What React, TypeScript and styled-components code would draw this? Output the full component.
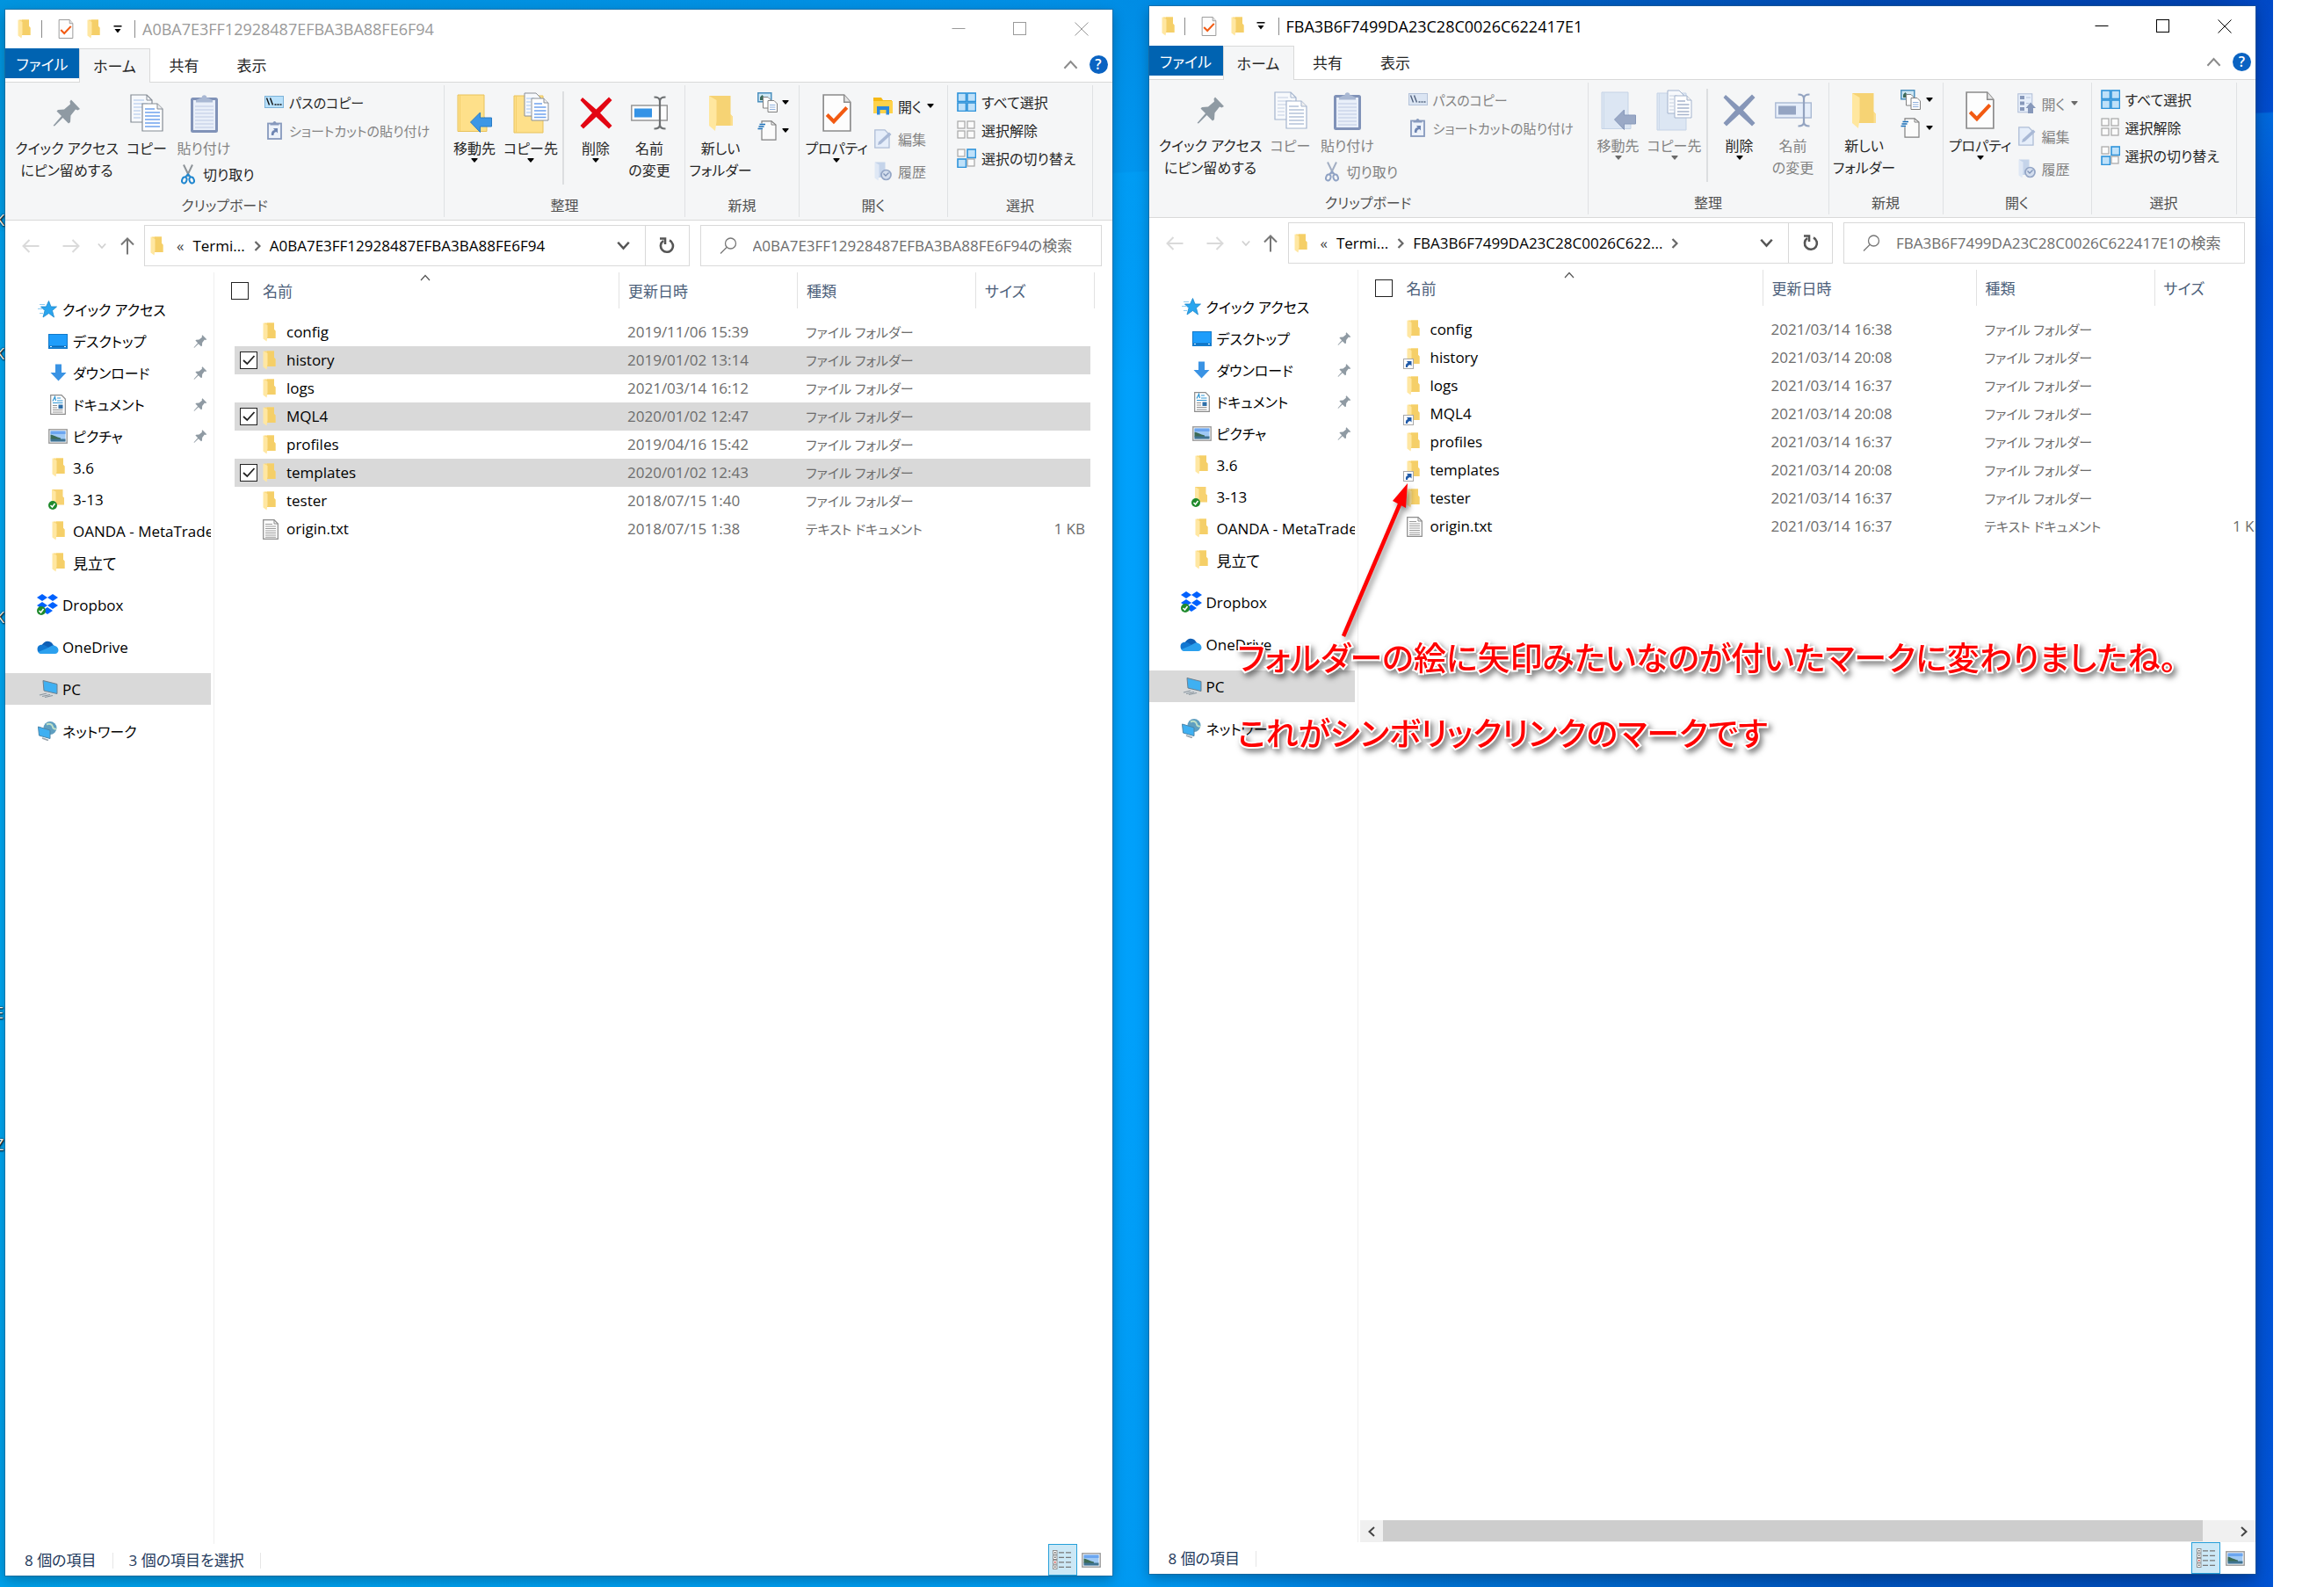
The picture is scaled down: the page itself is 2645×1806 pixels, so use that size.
import React from 'react';
import styled, { createGlobalStyle, css } from 'styled-components';

/* ---------- base ---------- */

const GlobalStyle = createGlobalStyle`
  *, *::before, *::after { box-sizing: border-box; }
  html, body { margin: 0; background: #fff; }
  body {
    font-family: "Open Sans", "Noto Sans CJK JP", sans-serif;
    font-size: 17px;
    color: #000;
    font-feature-settings: "palt";
  }
  button, input {
    font: inherit;
    font-feature-settings: inherit;
    color: inherit;
    margin: 0;
  }
  button { border: 0; padding: 0; background: none; }
  svg { display: block; flex: none; }
`;

const C = {
  line: '#d9d9d9',
  ribbon: '#f5f6f7',
  accent: '#0063b1',
  selected: '#d9d9d9',
  muted: '#6d6d6d',
  header: '#4c607a',
  status: '#1e395b',
};

const Page = styled.main`
  padding-right: 58px;
  background: #fff;
`;

const Desktop = styled.div`
  position: relative;
  display: flex;
  align-items: stretch;
  gap: 42px;
  min-height: 100vh;
  padding: 7px 20px 13px 6px;
  overflow: hidden;
  background:
    linear-gradient(177deg, transparent 0 262px, rgba(0, 170, 255, 0.3) 264px, transparent 420px),
    linear-gradient(180deg, rgba(0, 20, 90, 0.14), transparent 24%, transparent 64%, rgba(0, 90, 150, 0.1)),
    linear-gradient(90deg, #00a9f4 0%, #00a3fc 48%, #009dfa 52%, #0078dc 62%, #0052c0 82%, #0049bd 97%, #0052da 100%);
`;

const DesktopLabel = styled.span<{ $top: number }>`
  position: absolute;
  top: ${(p) => p.$top}px;
  left: -6px;
  font-size: 18px;
  line-height: 24px;
  color: #fff;
  text-shadow: 1px 1px 2px #000, 0 0 2px #000;
`;

/* ---------- window ---------- */

const Window = styled.section<{ $active?: boolean }>`
  position: relative;
  flex: 1 1 0;
  min-width: 0;
  display: flex;
  flex-direction: column;
  margin: ${(p) => (p.$active ? '0 0 2px' : '4px 0 0')};
  background: #fff;
  box-shadow: 0 0 0 1px rgba(40, 90, 130, 0.5), 0 5px 14px rgba(0, 0, 0, 0.28);
`;

const TitleBar = styled.header<{ $active?: boolean }>`
  display: flex;
  align-items: center;
  height: ${(p) => (p.$active ? 45 : 44)}px;
  padding-left: 14px;
  color: ${(p) => (p.$active ? '#000' : '#9a9a9a')};
`;

const QuickTools = styled.div`
  display: flex;
  align-items: center;
  padding-right: 9px;
`;

const QuickButton = styled.button<{ $width: number }>`
  display: flex;
  align-items: center;
  justify-content: center;
  width: ${(p) => p.$width}px;
  height: 28px;
`;

const TitleRule = styled.span`
  width: 1px;
  height: 20px;
  background: #8a8a8a;
`;

const WindowTitle = styled.h1`
  flex: 1;
  margin: 0;
  padding-left: 8px;
  font-size: 18px;
  line-height: 24px;
  font-weight: 400;
`;

const CaptionButton = styled.button`
  display: flex;
  align-items: center;
  justify-content: center;
  width: 70px;
  height: 44px;
`;

const TabStrip = styled.nav`
  display: flex;
  align-items: flex-start;
  height: 39px;
  border-bottom: 1px solid ${C.line};
`;

const FileTab = styled.button`
  width: 84px;
  height: 34px;
  background: ${C.accent};
  color: #fff;
`;

const Tab = styled.button<{ $current?: boolean }>`
  width: ${(p) => (p.$current ? 81 : 77)}px;
  height: 39px;
  padding-bottom: 2px;
  color: #262626;
  ${(p) =>
    p.$current &&
    css`
      background: ${C.ribbon};
      border: 1px solid ${C.line};
      border-bottom: 0;
    `}
`;

const TabTools = styled.div`
  display: flex;
  align-items: center;
  gap: 13px;
  margin-left: auto;
  padding: 8px 5px 0 0;
`;

/* ---------- ribbon ---------- */

const Ribbon = styled.div`
  display: flex;
  height: 157px;
  background: ${C.ribbon};
  border-bottom: 1px solid ${C.line};
  color: #262626;
  font-size: 16px;
`;

const GroupBox = styled.section<{ $width: number }>`
  display: flex;
  flex-direction: column;
  width: ${(p) => p.$width}px;
  margin: 3px 0;
  border-right: 1px solid #dfe1e3;
`;

const GroupTools = styled.div<{ $left: number }>`
  display: flex;
  align-items: flex-start;
  flex: 1;
  padding: 3px 0 0 ${(p) => p.$left}px;
`;

const GroupName = styled.h2`
  margin: 0;
  font-size: 16px;
  font-weight: 400;
  line-height: 26px;
  text-align: center;
  color: #505050;
`;

const ToolStack = styled.div<{ $width?: number; $top?: number; $pitch?: number }>`
  display: flex;
  flex-direction: column;
  width: ${(p) => (p.$width ? `${p.$width}px` : 'auto')};
  padding-top: ${(p) => p.$top ?? 0}px;
  & > button[data-small] { height: ${(p) => p.$pitch ?? 32}px; }
`;

const BigButton = styled.button<{ $width: number }>`
  display: flex;
  flex-direction: column;
  align-items: center;
  width: ${(p) => p.$width}px;
  color: #262626;
  white-space: nowrap;
  &:disabled { color: #838383; }
`;

const BigIcon = styled.span`
  display: flex;
  align-items: center;
  height: 57px;
`;

const BigLabel = styled.span`
  line-height: 25px;
`;

const BigCaret = styled.span`
  height: 8px;
  margin-top: -2px;
`;

const SmallButton = styled.button<{ $left?: number; $compact?: boolean }>`
  display: flex;
  align-items: center;
  gap: 6px;
  padding-left: ${(p) => p.$left ?? 6}px;
  color: #262626;
  font-size: ${(p) => (p.$compact ? 15 : 16)}px;
  white-space: nowrap;
  &:disabled { color: #838383; }
`;

const SmallIcon = styled.span`
  display: flex;
  justify-content: center;
  width: 22px;
`;

const ToolRule = styled.span`
  width: 2px;
  height: 106px;
  margin: 4px 6px 0 4px;
  background: #dcdee0;
`;

/* ---------- address row ---------- */

const AddressRow = styled.div`
  display: flex;
  padding: 5px 12px 7px 0;
`;

const NavButtons = styled.div`
  display: flex;
  align-items: center;
  width: 158px;
  padding-left: 9px;
`;

const NavButton = styled.button<{ $width: number }>`
  display: flex;
  justify-content: center;
  flex: none;
  width: ${(p) => p.$width}px;
`;

const AddressBox = styled.div`
  display: flex;
  align-items: center;
  flex: 1;
  min-width: 0;
  height: 47px;
  border: 1px solid ${C.line};
  padding-left: 6px;
`;

const Crumb = styled.button`
  margin: 0 10px;
  line-height: 24px;
  white-space: nowrap;
`;

const Guillemet = styled.span`
  margin-left: 15px;
  line-height: 24px;
  color: #444;
`;

const AddressEnd = styled.div`
  display: flex;
  align-items: center;
  align-self: stretch;
  margin-left: auto;
`;

const EndButton = styled.button<{ $ruled?: boolean }>`
  display: flex;
  align-items: center;
  justify-content: center;
  width: ${(p) => (p.$ruled ? 50 : 49)}px;
  height: 100%;
  ${(p) => p.$ruled && `border-left: 1px solid ${C.line};`}
`;

const SearchBox = styled.label`
  display: flex;
  align-items: center;
  gap: 18px;
  width: 457px;
  height: 47px;
  margin-left: 12px;
  padding-left: 21px;
  border: 1px solid ${C.line};
`;

const SearchInput = styled.input`
  flex: 1;
  min-width: 0;
  border: 0;
  padding: 0;
  outline: 0;
  background: transparent;
  &::placeholder { color: #6d6d6d; opacity: 1; }
`;

/* ---------- body ---------- */

const Body = styled.div`
  display: flex;
  flex: 1;
  min-height: 0;
`;

const Sidebar = styled.nav`
  width: 237px;
  flex: none;
  padding-top: 24px;
`;

const Splitter = styled.div`
  width: 1px;
  background: #efefef;
`;

const SideItem = styled.a<{ $child?: boolean; $gap?: boolean; $current?: boolean; $kana?: boolean }>`
  display: flex;
  align-items: center;
  width: 234px;
  height: 36px;
  margin-top: ${(p) => (p.$gap ? 12 : 0)}px;
  padding-left: ${(p) => (p.$child ? 47 : 35)}px;
  background: ${(p) => (p.$current ? C.selected : 'transparent')};
  color: #000;
  font-size: ${(p) => (p.$kana ? 16 : 17)}px;
  text-decoration: none;
  white-space: nowrap;
  overflow: hidden;
`;

const SideIcon = styled.span`
  display: flex;
  justify-content: center;
  flex: none;
  width: 26px;
  margin-right: 4px;
`;

const SidePin = styled.span`
  margin-left: auto;
  padding-right: 4px;
`;

const Pane = styled.div`
  display: flex;
  flex-direction: column;
  flex: 1;
  min-width: 0;
`;

const ListView = styled.div`
  flex: 1;
  overflow: hidden;
`;

const FileTable = styled.table`
  table-layout: fixed;
  border-collapse: separate;
  border-spacing: 0;
  width: max-content;
  tbody::before { content: ""; display: block; height: 11px; }
`;

const Col = styled.col<{ $width: number }>`
  width: ${(p) => p.$width}px;
`;

const HeadCell = styled.th<{ $ruled?: boolean }>`
  position: relative;
  height: 41px;
  padding: 0 0 0 10px;
  border-right: ${(p) => (p.$ruled ? '1px solid #e2e2e2' : '0')};
  color: ${C.header};
  font-size: 17px;
  font-weight: 400;
  text-align: left;
  &:first-child { padding-left: 19px; }
  &:nth-child(2) { padding-left: 0; }
`;

const SortMark = styled.span`
  position: absolute;
  top: 0;
  right: 214px;
`;

const Row = styled.tr<{ $selected?: boolean }>`
  td { background: ${(p) => (p.$selected ? C.selected : 'transparent')} padding-box; }
`;

const Cell = styled.td<{ $small?: boolean }>`
  height: 32px;
  padding: 0 0 0 9px;
  color: ${C.muted};
  font-size: ${(p) => (p.$small ? 15 : 17)}px;
  line-height: 24px;
  white-space: nowrap;
  &:first-child { padding-left: 6px; border-left: 23px solid transparent; }
  &:last-child { padding-right: 6px; border-right: 5px solid transparent; text-align: right; }
`;

const NameCell = styled(Cell)`
  padding-left: 0;
  color: #000;
`;

const NameLine = styled.span`
  display: flex;
  align-items: center;
`;

const FileIcon = styled.span`
  display: flex;
  width: 27px;
`;

const Check = styled.input`
  appearance: none;
  display: block;
  width: 20px;
  height: 20px;
  border: 1px solid #222;
  background: #fff;
  &:checked {
    background: #fff url("data:image/svg+xml,%3Csvg xmlns='http://www.w3.org/2000/svg' viewBox='0 0 18 18'%3E%3Cpath d='M3 9l4.3 4L15.500 4' fill='none' stroke='%23222' stroke-width='1.800'/%3E%3C/svg%3E") center / 18px 18px no-repeat;
  }
`;

const ScrollBar = styled.div`
  display: flex;
  height: 25px;
  margin-left: 2px;
  background: #f0f0f0;
`;

const ScrollArrow = styled.button`
  display: flex;
  align-items: center;
  justify-content: center;
  width: 26px;
`;

const ScrollTrack = styled.div`
  flex: 1;
  padding-right: 34px;
`;

const ScrollThumb = styled.div`
  height: 24px;
  background: #cdcdcd;
`;

const StatusBar = styled.footer`
  display: flex;
  align-items: center;
  height: 36px;
  padding: 0 12px 0 22px;
  color: ${C.status};
`;

const StatusText = styled.span`
  margin: 2px 18px 0 0;
  padding-right: 18px;
  border-right: 1px solid #e6e6e6;
  line-height: 18px;
`;

const ViewButtons = styled.div`
  display: flex;
  align-items: center;
  align-self: stretch;
  gap: 5px;
  margin-left: auto;
`;

const ViewButton = styled.button<{ $current?: boolean }>`
  display: flex;
  align-items: center;
  justify-content: center;
  width: ${(p) => (p.$current ? 33 : 23)}px;
  height: 100%;
  ${(p) => p.$current && 'background: #cce8f6; border: 1px solid #26a0da;'}
`;

/* ---------- annotation ---------- */

const Annotation = styled.div`
  position: absolute;
  top: 536px;
  left: 101px;
  pointer-events: none;
`;

const Arrow = styled.svg`
  margin-left: 109px;
  overflow: visible;
  filter: drop-shadow(3px 4px 3px rgba(0, 0, 0, 0.45));
`;

const NoteText = styled.p`
  margin: 0;
  font-size: 37px;
  line-height: 86px;
  font-weight: 500;
  white-space: nowrap;
  color: #f00;
  -webkit-text-stroke: 4px #fff;
  paint-order: stroke fill;
  filter: drop-shadow(3px 4px 3px rgba(0, 0, 0, 0.5));
  &:first-of-type { margin-top: -21px; }
`;

/* ---------- icons ---------- */

type Off = { off?: boolean };

const Folder = ({ w = 15, h = 22 }: { w?: number; h?: number }) => (
  <svg width={w} height={h} viewBox="0 0 15 22">
    <path d="M1.500 0.500H13V8l1.500 1.500V18H4z" fill="#fbd97c" />
    <path d="M5 0.500H13V8l1.500 1.500V18H5z" fill="#f5cf68" />
    <path d="M0.500 0.500 5.500 3V15.500L4.500 21.500 0.500 18.500z" fill="#ffe7a2" />
  </svg>
);

const PropsDoc = ({ w, h }: { w: number; h: number }) => (
  <svg width={w} height={h} viewBox="0 0 32 42">
    <path d="M1 1H24L31 9V41H1z" fill="#fdfdfd" stroke="#8a8a8a" strokeWidth="1.600" />
    <path d="M24 1V9H31" fill="#e6e6e6" stroke="#8a8a8a" strokeWidth="1.400" />
    <path d="M5 23l7.500 7.500L27 15" fill="none" stroke="#f25a12" strokeWidth="4" />
  </svg>
);

const Caret = ({ off }: Off) => (
  <svg width="8" height="5" viewBox="0 0 8 5">
    <path d="M0.500 0H7.500V1L4 5 0.500 1z" fill={off ? '#6b6b6b' : '#000'} />
  </svg>
);

const CustomizeCaret = () => (
  <svg width="10" height="9" viewBox="0 0 10 9">
    <path d="M0.500 0.800H9.500" stroke="#000" strokeWidth="1.500" />
    <path d="M1.500 4H8.500L5 8.500z" fill="#000" />
  </svg>
);

const Pin = ({ w = 32, h = 31 }: { w?: number; h?: number }) => (
  <svg width={w} height={h} viewBox="0 0 32 31">
    <path d="M21 0.500 31 11 28.500 12.500 26 11.500 20.500 18.500 20 26 18 27.500 11.500 21 2 30.500 0.500 30 10 19 4.500 13.500 6 12 13 11.500 20 5.500 19.500 2.500z" fill="#8f9aa3" />
  </svg>
);

const CopyIcon = ({ off }: Off) => {
  const edge = off ? '#a3b3cd' : '#848b94';
  const ink = off ? '#b4c2d9' : '#6fa3ee';
  return (
    <svg width="38" height="43" viewBox="0 0 38 43">
      <path d="M1 1H19L25 7V32H1z" fill="#f7f9fc" stroke={edge} strokeWidth="1.200" />
      <path d="M19 1V7H25" fill="none" stroke={edge} />
      <path d="M4 7H16M4 11H20M4 15H20M4 19H12M4 23H12M4 27H12" stroke={off ? '#c4cfe2' : '#a9c4ea'} strokeWidth="1.200" />
      <path d="M14 11H31L37 17V42H14z" fill="#fff" stroke={edge} strokeWidth="1.200" />
      <path d="M31 11V17H37" fill="#eee" stroke={edge} />
      <path d="M17 17H28M17 21H34M17 25H34M17 29H34M17 33H34M17 37H34" stroke={ink} strokeWidth="1.500" />
    </svg>
  );
};

const PasteIcon = () => (
  <svg width="31" height="44" viewBox="0 0 31 44">
    <rect x="1.500" y="5.500" width="28" height="37" rx="1" fill="#e9eff9" stroke="#8092b8" strokeWidth="3" />
    <path d="M5 14H26M5 18H26M5 22H26M5 26H26M5 30H26M5 34H26M5 38H26" stroke="#cbd6ea" strokeWidth="1.300" />
    <path d="M6 9.500V7L11 4.500H12.500C12.500 0 18.500 0 18.500 4.500H20L25 7V9.500z" fill="#a9b8d3" />
  </svg>
);

const PathIcon = ({ off }: Off) => (
  <svg width="22" height="14" viewBox="0 0 22 14">
    <rect x="0.500" y="0.500" width="21" height="13" fill={off ? '#dbe5f3' : '#b9e1fb'} stroke={off ? '#b5c3da' : '#7db3d8'} />
    <path d="M2.500 2.500 5.500 10.500M6.500 2.500 9.500 10.500" stroke={off ? '#52627e' : '#111'} strokeWidth="1.400" />
    <path d="M11.500 10H13.500M14.500 10H16.500M17.500 10H19.500" stroke={off ? '#52627e' : '#111'} strokeWidth="1.500" />
  </svg>
);

const ShortcutIcon = () => (
  <svg width="17" height="22" viewBox="0 0 17 22">
    <rect x="1" y="3.500" width="15" height="17.500" fill="#edf2fa" stroke="#8799bd" strokeWidth="1.800" />
    <path d="M3.500 5.500V3.500H6.500C6.500 0 10.500 0 10.500 3.500H13.500V5.500z" fill="#8799bd" />
    <path d="M5 17C4.500 13 6 11.500 8.500 11L7 9H12V14.500L10.500 13C8 13.500 7.500 15 7.500 17z" fill="#6f86b3" />
  </svg>
);

const CutIcon = ({ off }: Off) => (
  <svg width="16" height="23" viewBox="0 0 16 23">
    <path d="M3 0.500 9.500 14M13 0.500 6.500 14" stroke={off ? '#a3afc4' : '#8e9499'} strokeWidth="2" />
    <ellipse cx="3.800" cy="18" rx="2.600" ry="3.600" transform="rotate(18 3.800 18)" fill="none" stroke={off ? '#8fa2c4' : '#1f86cf'} strokeWidth="2" />
    <ellipse cx="12.200" cy="18" rx="2.600" ry="3.600" transform="rotate(-18 12.200 18)" fill="none" stroke={off ? '#8fa2c4' : '#1f86cf'} strokeWidth="2" />
    <path d="M5 14.500 8 11.500 11 14.500" fill="none" stroke={off ? '#8fa2c4' : '#1f86cf'} strokeWidth="2" />
  </svg>
);

const MoveIcon = ({ off }: Off) => (
  <svg width="40" height="44" viewBox="0 0 40 44">
    <path d="M1 1H31V26L34 30V42.500H1z" fill={off ? '#dce6f3' : '#fee08a'} stroke={off ? '#c5d3e6' : '#e8c25a'} />
    <path d="M3.500 1V42" stroke={off ? '#cddaea' : '#f4cf6c'} />
    <path d="M15.500 32 26.500 21V27H39.500V37H26.500V43.500z" fill={off ? '#9aa9c6' : '#3d97e6'} stroke={off ? '#8798ba' : '#2b7cc4'} />
  </svg>
);

const CopyToIcon = ({ off }: Off) => {
  const edge = off ? '#a3b3cd' : '#8a8f96';
  const ink = off ? '#a6b4cc' : '#6fa3ee';
  return (
    <svg width="41" height="47" viewBox="0 0 41 47">
      <path d="M1 4H34V46H1z" fill={off ? '#dce6f3' : '#fee08a'} stroke={off ? '#c5d3e6' : '#e8c25a'} />
      <path d="M3.500 4V46" stroke={off ? '#cddaea' : '#f4cf6c'} />
      <path d="M13 1H26L31 6V27H13z" fill="#f7f9fc" stroke={edge} />
      <path d="M15 7H24M15 11H20M15 15H20M15 19H20M15 23H20" stroke={ink} strokeOpacity="0.600" strokeWidth="1.200" />
      <path d="M21 7H35L40 12V32H21z" fill="#fff" stroke={edge} />
      <path d="M35 7V12H40" fill="#eee" stroke={edge} />
      <path d="M24 13H33M24 17H37.500M24 21H37.500M24 25H37.500M24 28.500H37.500" stroke={ink} strokeWidth="1.500" />
    </svg>
  );
};

const DeleteIcon = ({ off }: Off) => (
  <svg width="37" height="37" viewBox="0 0 37 37">
    <path d="M3 1 18.500 14.500 33 0.500 36.500 4 23 18.500 36.500 33 33 36.500 18.500 23 4 36.500 0.500 33 14 18.500 0.500 4z" fill={off ? '#8696b8' : '#e30613'} />
  </svg>
);

const RenameIcon = ({ off }: Off) => {
  const beam = off ? '#93a3c0' : '#6d7072';
  return (
    <svg width="42" height="39" viewBox="0 0 42 39">
      <rect x="0.800" y="11" width="40.500" height="17" fill={off ? '#e6eefa' : '#fdfdfd'} stroke={off ? '#a9b8d2' : '#8f8f8f'} strokeWidth="1.400" />
      <rect x="4" y="14.500" width="20" height="10" fill={off ? '#94a4c2' : '#3493e6'} />
      <path d="M26.500 1.500C30.500 1.500 33 3 33 6V33C33 36 30.500 37.500 26.500 37.500M39.500 1.500C35.500 1.500 33 3 33 6V33C33 36 35.500 37.500 39.500 37.500" fill="none" stroke={beam} strokeWidth="2.200" />
    </svg>
  );
};

const NewFolderIcon = () => (
  <svg width="29" height="42" viewBox="0 0 29 42">
    <path d="M1 1H25.500V22L28 25V35H8z" fill="#f6d374" />
    <path d="M1 1 9.500 6V30L8 41 1 35z" fill="#ffe79f" />
    <path d="M25.500 22V35H28V25z" fill="#fbdf90" />
  </svg>
);

const NewItemIcon = () => (
  <svg width="23" height="23" viewBox="0 0 23 23">
    <rect x="0.800" y="0.800" width="15" height="10" fill="#cfe8f5" stroke="#4a8fbd" strokeWidth="1.500" />
    <path d="M3 9V5.500L5.500 3 8 6V9z" fill="#3c6b5a" />
    <path d="M6.500 5.500H12L15 8.500V18H6.500z" fill="#fff" stroke="#808080" />
    <path d="M12 9.500H19L22.500 13V22.500H12z" fill="#fff" stroke="#808080" />
    <path d="M14 14.500H20.500M14 17H20.500M14 19.500H20.500" stroke="#8fb0dd" />
  </svg>
);

const EasyAccessIcon = () => (
  <svg width="23" height="23" viewBox="0 0 23 23">
    <path d="M5 0.800H16L21 5V22.200H5z" fill="#fbfbfb" stroke="#808080" strokeWidth="1.200" />
    <path d="M16 0.800V5H21" fill="none" stroke="#808080" />
    <rect x="0" y="3.500" width="8" height="7" fill="#f5f6f7" />
    <path d="M2.500 4.500H9M1.500 7H7.500M0.500 9.500H6" stroke="#1b6fb8" strokeWidth="1.300" />
  </svg>
);

const OpenIcon = ({ off }: Off) =>
  off ? (
    <svg width="22" height="24" viewBox="0 0 22 24">
      <rect x="0.800" y="0.800" width="16" height="21" fill="#e6eefa" stroke="#aebdd6" />
      <path d="M3 3H8V7H3zM3 9.500H8V13.500H3zM3 16H8V20H3z" fill="#8798ba" />
      <path d="M10 5H15M10 11.500H13" stroke="#b4c2d9" />
      <path d="M15 10.500 21 17H18V23H12V17H9.500z" fill="#8798ba" />
    </svg>
  ) : (
    <svg width="22" height="20" viewBox="0 0 22 20">
      <path d="M0 0H9L11 3H21V18H0z" fill="#f6b913" />
      <path d="M0 4H22V18H0z" fill="#ffd24a" />
      <path d="M4 19.500V10H18V19.500H14.500V14H7.500V19.500z" fill="#2c88dd" />
    </svg>
  );

const EditIcon = () => (
  <svg width="20" height="22" viewBox="0 0 20 22">
    <path d="M0.800 0.800H12L17 6V21.200H0.800z" fill="#e6eefa" stroke="#aebdd6" strokeWidth="1.300" />
    <path d="M4 18 5 14.500 17 3.500 19.500 6 7.500 17z" fill="#a9b9d6" />
  </svg>
);

const HistoryIcon = () => (
  <svg width="20" height="22" viewBox="0 0 20 22">
    <path d="M1 0.500H12.500V9L14 10.500V18H4z" fill="#c5d4ea" />
    <path d="M0.500 0.500 5.500 3.500V15L4.500 21.500 0.500 18.500z" fill="#dfe8f5" />
    <circle cx="13.500" cy="15" r="5.500" fill="#d4deee" stroke="#93a5c5" strokeWidth="1.700" />
    <path d="M10.500 13.500 13 16 16.500 12.500" fill="none" stroke="#7e92b6" strokeWidth="1.300" />
  </svg>
);

const SelectGrid = ({ on }: { on: boolean[] }) => (
  <svg width="22" height="22" viewBox="0 0 22 22">
    {on.map((lit, i) => (
      <rect
        key={i}
        x={(i % 2) * 11 + 1}
        y={Math.floor(i / 2) * 11 + 1}
        width={lit ? 9.5 : 8}
        height={lit ? 9.5 : 8}
        fill={lit ? '#bfe1f9' : '#fbfbfb'}
        stroke={lit ? '#2f93da' : '#a6a6a6'}
        strokeWidth={lit ? 1.6 : 1.2}
      />
    ))}
  </svg>
);

const Minimize = () => (
  <svg width="16" height="16" viewBox="0 0 16 16">
    <path d="M0.500 7.500H15.500" stroke="currentColor" />
  </svg>
);
const Maximize = () => (
  <svg width="16" height="16" viewBox="0 0 16 16">
    <rect x="0.500" y="0.500" width="14" height="14" fill="none" stroke="currentColor" />
  </svg>
);
const Close = () => (
  <svg width="16" height="16" viewBox="0 0 16 16">
    <path d="M0.500 0.500 15.500 15.500M15.500 0.500 0.500 15.500" stroke="currentColor" />
  </svg>
);

type Dir = 'up' | 'down' | 'left' | 'right';
const turn: Record<Dir, number> = { up: 0, right: 90, down: 180, left: 270 };
const Chevron = ({ dir, size = 12, color = '#666', weight = 2 }: { dir: Dir; size?: number; color?: string; weight?: number }) => (
  <svg width={size} height={size} viewBox="0 0 12 12">
    <path d="M1 9 6 3.500 11 9" transform={`rotate(${turn[dir]} 6 6)`} fill="none" stroke={color} strokeWidth={weight} />
  </svg>
);

const CrumbMark = () => (
  <svg width="8" height="12" viewBox="0 0 8 12">
    <path d="M1.500 1 6.500 6 1.500 11" fill="none" stroke="#666" strokeWidth="2.200" />
  </svg>
);

const Arrowhead = ({ dir, color }: { dir: Dir; color: string }) => (
  <svg width="20" height="20" viewBox="0 0 20 20">
    <path d="M10 19.500V1.500M3 8.500 10 1.500 17 8.500" transform={`rotate(${turn[dir]} 10 10)`} fill="none" stroke={color} strokeWidth="2" />
  </svg>
);

const Refresh = () => (
  <svg width="18" height="19" viewBox="0 0 18 19">
    <path d="M12 3.500A7 7 0 1 1 5 4" fill="none" stroke="#555" strokeWidth="2.600" />
    <path d="M1 1.500H7V8" fill="none" stroke="#555" strokeWidth="2.600" />
  </svg>
);

const Magnifier = () => (
  <svg width="20" height="20" viewBox="0 0 20 20">
    <circle cx="12.500" cy="7" r="6" fill="none" stroke="#777" strokeWidth="1.300" />
    <path d="M8 11.500 1 18.500" stroke="#777" strokeWidth="1.300" />
  </svg>
);

const HelpMark = styled.button`
  width: 21px;
  height: 21px;
  border-radius: 50%;
  background: #0a63c2;
  color: #fff;
  font-size: 16px;
  line-height: 21px;
  font-weight: 600;
`;

const StarIcon = () => (
  <svg width="22" height="20" viewBox="0 0 22 20">
    <path d="M12.500 0.500 15 7H21.500L16.500 11.500 18.500 19 12.500 14.500 6 19 8 11.500 3.500 7H9.500z" fill="#2aa5ee" stroke="#1b86cc" strokeWidth="0.800" />
    <path d="M2 4.500H8M0 9.500H5M2 14.500H6" stroke="#8ecbf0" strokeWidth="1.200" />
  </svg>
);
const DesktopIcon = () => (
  <svg width="22" height="17" viewBox="0 0 22 17">
    <rect x="0.500" y="0.500" width="21" height="16" fill="#1e9dfb" stroke="#1279c9" />
    <path d="M1 14.500H21" stroke="#0d6ab5" strokeWidth="2" />
    <path d="M2 14.500H4M18 14.500H20" stroke="#d9f0ff" />
  </svg>
);
const DownloadIcon = () => (
  <svg width="19" height="20" viewBox="0 0 19 20">
    <path d="M6 0.500H13V10H18.500L9.500 19.500 0.500 10H6z" fill="#3a93e4" />
  </svg>
);
const DocumentIcon = () => (
  <svg width="18" height="23" viewBox="0 0 18 23">
    <path d="M0.700 0.700H13L17.300 5V22.300H0.700z" fill="#fff" stroke="#8b8b8b" strokeWidth="1.200" />
    <path d="M3 7.500 5.500 2.500 6.500 7M8 4H12M8 7H14.500M3 9.500H14.500" fill="none" stroke="#2e95d3" strokeWidth="1.200" />
    <path d="M3 12.500H8M3 15H8M3 17.500H14.500M3 20H14.500" stroke="#909090" />
    <rect x="9.500" y="11.500" width="5" height="4.500" fill="#2f6fa8" />
  </svg>
);
const PictureIcon = ({ h = 17 }: { h?: number }) => (
  <svg width="22" height={h} viewBox="0 0 22 17" preserveAspectRatio="none">
    <rect x="0.800" y="0.800" width="20.400" height="15.400" fill="#fff" stroke="#9a9a9a" strokeWidth="1.400" />
    <rect x="2.500" y="2.500" width="17" height="12" fill="#9fc9f5" />
    <path d="M2.500 2.500H19.500V6H2.500z" fill="#6ca6f0" />
    <path d="M2.500 6.500C6 7 9 9.500 14 10.500V12H2.500z" fill="#3c6b55" />
    <path d="M2.500 11.500H19.500V14.500H2.500z" fill="#3f7391" />
  </svg>
);
const Badge = () => (
  <g>
    <circle cx="5" cy="19" r="5" fill="#1f8a2c" />
    <path d="M2.500 19 4.500 21 7.500 17" fill="none" stroke="#fff" strokeWidth="1.500" />
  </g>
);
const SyncedFolderIcon = () => (
  <svg width="23" height="24" viewBox="0 0 23 24">
    <path d="M4 1H16.500V9L18 10.500V18.500H7z" fill="#f7d271" />
    <path d="M4 1 8.500 3.500V15L7.500 21 4 19z" fill="#ffe7a2" />
    <Badge />
  </svg>
);
const DropboxIcon = () => (
  <svg width="24" height="25" viewBox="0 0 24 25">
    <path d="M6 0 12 4 6 8 0 4zM18 0 24 4 18 8 12 4zM6 9 12 13 6 17 0 13zM18 9 24 13 18 17 12 13zM12 15 18 19 12 23 6 19z" fill="#0061fe" />
    <Badge />
  </svg>
);
const OneDriveIcon = () => (
  <svg width="25" height="17" viewBox="0 0 25 17">
    <path d="M6 5.500A7 7 0 0 1 18 5L20 8 12 12 4 9z" fill="#0f5fb5" />
    <path d="M5 16A5.200 5.200 0 0 1 4.500 5.800C8 5 11 7 16 11L7 16z" fill="#1177d1" />
    <path d="M11 10 17.500 6.500C21 6 24.500 8.500 24.500 12A4.300 4.300 0 0 1 20.500 16H5C3 16 2 15 1.500 14z" fill="#2ba0ee" />
  </svg>
);
const PcIcon = () => (
  <svg width="24" height="21" viewBox="0 0 24 21">
    <path d="M7 0.500 23 4.500V15.500L8 12z" fill="#3fb0f2" stroke="#6c7f8e" />
    <path d="M1 16.500 11 14 21 17.500 11 20.500z" fill="#cfd5da" />
    <path d="M3 17 11 15M6 18.500 15 16.500M9 19.500 18 17.500" stroke="#8b949b" />
  </svg>
);
const NetworkIcon = () => (
  <svg width="22" height="22" viewBox="0 0 22 22">
    <circle cx="14" cy="7.500" r="7.500" fill="#5f9fc0" />
    <path d="M10 3.500C13 2 16 3 17 6 17 9 20 8 21 9" fill="none" stroke="#bfe0c8" strokeWidth="2" />
    <path d="M0.500 6 14 10V19.500L1.500 16z" fill="#3fb0f2" stroke="#4c86aa" />
    <path d="M5 19 12 21.500" stroke="#9aa5ad" strokeWidth="1.800" />
  </svg>
);
const TextFileIcon = () => (
  <svg width="18" height="23" viewBox="0 0 18 23">
    <path d="M0.700 0.700H13L17.300 5V22.300H0.700z" fill="#fdfdfd" stroke="#8b8b8b" strokeWidth="1.200" />
    <path d="M13 0.700V5H17.300" fill="none" stroke="#8b8b8b" />
    <path d="M3 5.500H11M3 8H15M3 10.500H15M3 13H15M3 15.500H15M3 18H15M3 20.300H15" stroke="#9c9c9c" />
  </svg>
);
const LinkedFolder = styled.span`
  position: relative;
  & > svg + svg {
    position: absolute;
    left: -4px;
    bottom: -2px;
  }
`;
const LinkMark = () => (
  <svg width="12" height="12" viewBox="0 0 12 12">
    <rect x="0.500" y="0.500" width="11" height="11" fill="#fff" stroke="#a8a8a8" />
    <path d="M3 10C2.500 7 3.500 5.500 5.500 5L4 3H9.500V8.500L8 7C6 7.500 5 8 5 10z" fill="#1f5aa8" />
  </svg>
);
const DetailsIcon = () => (
  <svg width="22" height="22" viewBox="0 0 22 22">
    {[0, 5.5, 11, 16.5].map((y, i) => (
      <g key={y}>
        <rect x="0.500" y={y + 0.5} width="4.500" height="4.500" fill="#fff" stroke="#8f8f8f" />
        <rect x="2" y={y + 2} width="1.500" height="1.500" fill={i === 2 ? '#c02020' : '#555'} />
        <path d={`M7 ${y + 2.8}H13M15 ${y + 2.8}H21`} stroke="#777" strokeWidth="1.300" />
      </g>
    ))}
  </svg>
);

/* ---------- data ---------- */

type Entry = { name: string; date: string; kind?: 'text' | 'link'; checked?: boolean };

const leftFiles: Entry[] = [
  { name: 'config', date: '2019/11/06 15:39' },
  { name: 'history', date: '2019/01/02 13:14', checked: true },
  { name: 'logs', date: '2021/03/14 16:12' },
  { name: 'MQL4', date: '2020/01/02 12:47', checked: true },
  { name: 'profiles', date: '2019/04/16 15:42' },
  { name: 'templates', date: '2020/01/02 12:43', checked: true },
  { name: 'tester', date: '2018/07/15 1:40' },
  { name: 'origin.txt', date: '2018/07/15 1:38', kind: 'text' },
];

const rightFiles: Entry[] = [
  { name: 'config', date: '2021/03/14 16:38' },
  { name: 'history', date: '2021/03/14 20:08', kind: 'link' },
  { name: 'logs', date: '2021/03/14 16:37' },
  { name: 'MQL4', date: '2021/03/14 20:08', kind: 'link' },
  { name: 'profiles', date: '2021/03/14 16:37' },
  { name: 'templates', date: '2021/03/14 20:08', kind: 'link' },
  { name: 'tester', date: '2021/03/14 16:37' },
  { name: 'origin.txt', date: '2021/03/14 16:37', kind: 'text' },
];

type Place = { label: string; icon: React.ReactNode; child?: boolean; pinned?: boolean; gap?: boolean; current?: boolean };

const places: Place[] = [
  { label: 'クイック アクセス', icon: <StarIcon /> },
  { label: 'デスクトップ', icon: <DesktopIcon />, child: true, pinned: true },
  { label: 'ダウンロード', icon: <DownloadIcon />, child: true, pinned: true },
  { label: 'ドキュメント', icon: <DocumentIcon />, child: true, pinned: true },
  { label: 'ピクチャ', icon: <PictureIcon />, child: true, pinned: true },
  { label: '3.6', icon: <Folder />, child: true },
  { label: '3-13', icon: <SyncedFolderIcon />, child: true },
  { label: 'OANDA - MetaTrader', icon: <Folder />, child: true },
  { label: '見立て', icon: <Folder />, child: true },
  { label: 'Dropbox', icon: <DropboxIcon />, gap: true },
  { label: 'OneDrive', icon: <OneDriveIcon />, gap: true },
  { label: 'PC', icon: <PcIcon />, gap: true, current: true },
  { label: 'ネットワーク', icon: <NetworkIcon />, gap: true },
];

/* ---------- parts ---------- */

const Big = ({ icon, lines, width, off, menu }: { icon: React.ReactNode; lines: string[]; width: number; off?: boolean; menu?: boolean }) => (
  <BigButton type="button" $width={width} disabled={off}>
    <BigIcon>{icon}</BigIcon>
    {lines.map((l) => (
      <BigLabel key={l}>{l}</BigLabel>
    ))}
    {menu && (
      <BigCaret>
        <Caret off={off} />
      </BigCaret>
    )}
  </BigButton>
);

type SmallProps = { icon: React.ReactNode; label?: string; name?: string; off?: boolean; menu?: boolean; left?: number; compact?: boolean };

const Small = ({ icon, label, name, off, menu, left, compact }: SmallProps) => (
  <SmallButton type="button" data-small disabled={off} $left={left} $compact={compact} aria-label={name}>
    <SmallIcon>{icon}</SmallIcon>
    {label && <span>{label}</span>}
    {menu && <Caret off={off} />}
  </SmallButton>
);

const Group = ({ name, width, left = 0, children }: { name: string; width: number; left?: number; children: React.ReactNode }) => (
  <GroupBox $width={width}>
    <GroupTools $left={left}>{children}</GroupTools>
    <GroupName>{name}</GroupName>
  </GroupBox>
);

const RibbonBar = ({ off }: { off: boolean }) => (
  <Ribbon>
    <Group name="クリップボード" width={500} left={9}>
      <Big icon={<Pin />} lines={['クイック アクセス', 'にピン留めする']} width={122} />
      <Big icon={<CopyIcon off={off} />} lines={['コピー']} width={60} off={off} />
      <ToolStack $width={98}>
        <Big icon={<PasteIcon />} lines={['貼り付け']} width={70} off />
        <Small icon={<CutIcon off={off} />} label="切り取り" off={off} />
      </ToolStack>
      <ToolStack>
        <Small icon={<PathIcon off={off} />} label="パスのコピー" off={off} compact />
        <Small icon={<ShortcutIcon />} label="ショートカットの貼り付け" off compact />
      </ToolStack>
    </Group>
    <Group name="整理" width={274} left={2}>
      <Big icon={<MoveIcon off={off} />} lines={['移動先']} width={64} off={off} menu />
      <Big icon={<CopyToIcon off={off} />} lines={['コピー先']} width={64} off={off} menu />
      <ToolRule />
      <Big icon={<DeleteIcon off={off} />} lines={['削除']} width={60} menu />
      <Big icon={<RenameIcon off={off} />} lines={['名前', 'の変更']} width={62} off={off} />
    </Group>
    <Group name="新規" width={130} left={3}>
      <Big icon={<NewFolderIcon />} lines={['新しい', 'フォルダー']} width={74} />
      <ToolStack>
        <Small icon={<NewItemIcon />} name="新しいアイテム" menu left={5} />
        <Small icon={<EasyAccessIcon />} name="ショートカット" menu left={5} />
      </ToolStack>
    </Group>
    <Group name="開く" width={169} left={4}>
      <Big icon={<PropsDoc w={33} h={43} />} lines={['プロパティ']} width={76} menu />
      <ToolStack $top={2} $pitch={37}>
        <Small icon={<OpenIcon off={off} />} label="開く" off={off} menu left={4} />
        <Small icon={<EditIcon />} label="編集" off left={4} />
        <Small icon={<HistoryIcon />} label="履歴" off left={4} />
      </ToolStack>
    </Group>
    <Group name="選択" width={165} left={4}>
      <ToolStack>
        <Small icon={<SelectGrid on={[true, true, true, true]} />} label="すべて選択" />
        <Small icon={<SelectGrid on={[false, false, false, false]} />} label="選択解除" />
        <Small icon={<SelectGrid on={[false, true, true, false]} />} label="選択の切り替え" />
      </ToolStack>
    </Group>
  </Ribbon>
);

const iconFor = (kind?: Entry['kind']) => {
  if (kind === 'text') return <TextFileIcon />;
  if (kind === 'link')
    return (
      <LinkedFolder>
        <Folder />
        <LinkMark />
      </LinkedFolder>
    );
  return <Folder />;
};

const Files = ({ files, dateWidth }: { files: Entry[]; dateWidth: number }) => (
  <FileTable>
    <colgroup>
      <Col $width={55} />
      <Col $width={406} />
      <Col $width={dateWidth} />
      <Col $width={203} />
      <Col $width={135} />
    </colgroup>
    <thead>
      <tr>
        <HeadCell>
          <Check type="checkbox" aria-label="すべて選択" />
        </HeadCell>
        <HeadCell $ruled>
          名前
          <SortMark>
            <Chevron dir="up" size={12} color="#555" weight={1.2} />
          </SortMark>
        </HeadCell>
        <HeadCell $ruled>更新日時</HeadCell>
        <HeadCell $ruled>種類</HeadCell>
        <HeadCell $ruled>サイズ</HeadCell>
      </tr>
    </thead>
    <tbody>
      {files.map((f) => (
        <Row key={f.name} $selected={f.checked}>
          <Cell>{f.checked && <Check type="checkbox" defaultChecked aria-label={f.name} />}</Cell>
          <NameCell>
            <NameLine>
              <FileIcon>{iconFor(f.kind)}</FileIcon>
              {f.name}
            </NameLine>
          </NameCell>
          <Cell>{f.date}</Cell>
          <Cell $small>{f.kind === 'text' ? 'テキスト ドキュメント' : 'ファイル フォルダー'}</Cell>
          <Cell>{f.kind === 'text' ? '1 KB' : ''}</Cell>
        </Row>
      ))}
    </tbody>
  </FileTable>
);

type ExplorerProps = {
  title: string;
  crumb: string;
  files: Entry[];
  dateWidth: number;
  status: string[];
  active?: boolean;
  children?: React.ReactNode;
};

const Explorer = ({ title, crumb, files, dateWidth, status, active, children }: ExplorerProps) => (
  <Window $active={active}>
    <TitleBar $active={active}>
      <QuickTools>
        <Folder />
        <QuickButton $width={24} type="button" aria-label="システム">
          <TitleRule />
        </QuickButton>
        <QuickButton $width={31} type="button" aria-label="プロパティ">
          <PropsDoc w={18} h={22} />
        </QuickButton>
        <QuickButton $width={33} type="button" aria-label="新しいフォルダー">
          <Folder />
        </QuickButton>
        <QuickButton $width={21} type="button" aria-label="カスタマイズ">
          <CustomizeCaret />
        </QuickButton>
      </QuickTools>
      <TitleRule />
      <WindowTitle>{title}</WindowTitle>
      <CaptionButton type="button" aria-label="最小化">
        <Minimize />
      </CaptionButton>
      <CaptionButton type="button" aria-label="最大化">
        <Maximize />
      </CaptionButton>
      <CaptionButton type="button" aria-label="閉じる">
        <Close />
      </CaptionButton>
    </TitleBar>
    <TabStrip>
      <FileTab type="button">ファイル</FileTab>
      <Tab type="button" $current>
        ホーム
      </Tab>
      <Tab type="button">共有</Tab>
      <Tab type="button">表示</Tab>
      <TabTools>
        <Chevron dir="up" size={17} color="#8c8c8c" weight={1.4} />
        <HelpMark type="button">?</HelpMark>
      </TabTools>
    </TabStrip>
    <RibbonBar off={!!active} />
    <AddressRow>
      <NavButtons>
        <NavButton $width={40} type="button" aria-label="戻る">
          <Arrowhead dir="left" color="#dadada" />
        </NavButton>
        <NavButton $width={52} type="button" aria-label="進む">
          <Arrowhead dir="right" color="#dadada" />
        </NavButton>
        <NavButton $width={18} type="button" aria-label="最近表示した場所">
          <Chevron dir="down" size={10} color="#d0d0d0" />
        </NavButton>
        <NavButton $width={39} type="button" aria-label="上へ">
          <Arrowhead dir="up" color="#777" />
        </NavButton>
      </NavButtons>
      <AddressBox>
        <Folder />
        <Guillemet>«</Guillemet>
        <Crumb type="button">Termi...</Crumb>
        <CrumbMark />
        <Crumb type="button">{crumb}</Crumb>
        {active && <CrumbMark />}
        <AddressEnd>
          <EndButton type="button" aria-label="以前の場所">
            <Chevron dir="down" size={15} color="#555" />
          </EndButton>
          <EndButton type="button" $ruled aria-label="更新">
            <Refresh />
          </EndButton>
        </AddressEnd>
      </AddressBox>
      <SearchBox>
        <Magnifier />
        <SearchInput type="text" placeholder={`${title}の検索`} aria-label="検索" />
      </SearchBox>
    </AddressRow>
    <Body>
      <Sidebar>
        {places.map((p) => (
          <SideItem key={p.label} href="#" $child={p.child} $gap={p.gap} $current={p.current} $kana={/[ァ-ヶ]/.test(p.label)}>
            <SideIcon>{p.icon}</SideIcon>
            {p.label}
            {p.pinned && (
              <SidePin>
                <Pin w={16} h={15} />
              </SidePin>
            )}
          </SideItem>
        ))}
      </Sidebar>
      <Splitter />
      <Pane>
        <ListView>
          <Files files={files} dateWidth={dateWidth} />
        </ListView>
        {active && (
          <ScrollBar>
            <ScrollArrow type="button" aria-label="左へ">
              <Chevron dir="left" color="#444" />
            </ScrollArrow>
            <ScrollTrack>
              <ScrollThumb />
            </ScrollTrack>
            <ScrollArrow type="button" aria-label="右へ">
              <Chevron dir="right" color="#444" />
            </ScrollArrow>
          </ScrollBar>
        )}
      </Pane>
    </Body>
    <StatusBar>
      {status.map((s) => (
        <StatusText key={s}>{s}</StatusText>
      ))}
      <ViewButtons>
        <ViewButton type="button" $current aria-label="詳細">
          <DetailsIcon />
        </ViewButton>
        <ViewButton type="button" aria-label="大アイコン">
          <PictureIcon />
        </ViewButton>
      </ViewButtons>
    </StatusBar>
    {children}
  </Window>
);

export default function App() {
  return (
    <Page>
      <GlobalStyle />
      <Desktop>
        <DesktopLabel $top={238}>K</DesktopLabel>
        <DesktopLabel $top={390}>K</DesktopLabel>
        <DesktopLabel $top={690}>K</DesktopLabel>
        <DesktopLabel $top={1140}>E</DesktopLabel>
        <DesktopLabel $top={1290}>Z</DesktopLabel>
        <Explorer
          title="A0BA7E3FF12928487EFBA3BA88FE6F94"
          crumb="A0BA7E3FF12928487EFBA3BA88FE6F94"
          files={leftFiles}
          dateWidth={203}
          status={['8 個の項目', '3 個の項目を選択']}
        />
        <Explorer
          active
          title="FBA3B6F7499DA23C28C0026C622417E1"
          crumb="FBA3B6F7499DA23C28C0026C622..."
          files={rightFiles}
          dateWidth={243}
          status={['8 個の項目']}
        >
          <Annotation>
            <Arrow width="90" height="184" viewBox="0 0 90 184">
              <path d="M11 181 78 24" stroke="#f00" strokeWidth="4.500" />
              <path d="M84 7 82 35 67 27z" fill="#f00" />
            </Arrow>
            <NoteText>フォルダーの絵に矢印みたいなのが付いたマークに変わりましたね。</NoteText>
            <NoteText>これがシンボリックリンクのマークです</NoteText>
          </Annotation>
        </Explorer>
      </Desktop>
    </Page>
  );
}
